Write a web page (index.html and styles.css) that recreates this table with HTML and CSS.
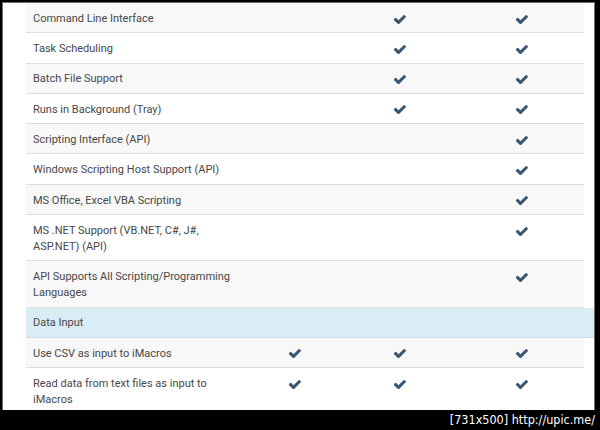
FILE: index.html
```html
<!DOCTYPE html>
<html lang="en">
<head>
    <meta charset="UTF-8">
    <title>iMacros Feature Comparison</title>
    <link rel="stylesheet" href="styles.css">
</head>
<body>
    <svg class="defs" width="0" height="0">
        <symbol id="check" viewBox="143 402 1528 1024">
            <path d="M1671 566q0 40-28 68l-724 724-136 136q-28 28-68 28t-68-28l-136-136-362-362q-28-28-28-68t28-68l136-136q28-28 68-28t68 28l294 295 656-657q28-28 68-28t68 28l136 136q28 28 28 68z"/>
        </symbol>
    </svg>
    <div class="frame">
        <div class="features">
            <div class="row">
                <div class="name">Command Line Interface</div>
                <div class="cell"></div>
                <div class="cell"><svg class="tick"><use href="#check"/></svg></div>
                <div class="cell"><svg class="tick"><use href="#check"/></svg></div>
            </div>
            <div class="row">
                <div class="name">Task Scheduling</div>
                <div class="cell"></div>
                <div class="cell"><svg class="tick"><use href="#check"/></svg></div>
                <div class="cell"><svg class="tick"><use href="#check"/></svg></div>
            </div>
            <div class="row">
                <div class="name">Batch File Support</div>
                <div class="cell"></div>
                <div class="cell"><svg class="tick"><use href="#check"/></svg></div>
                <div class="cell"><svg class="tick"><use href="#check"/></svg></div>
            </div>
            <div class="row">
                <div class="name">Runs in Background (Tray)</div>
                <div class="cell"></div>
                <div class="cell"><svg class="tick"><use href="#check"/></svg></div>
                <div class="cell"><svg class="tick"><use href="#check"/></svg></div>
            </div>
            <div class="row">
                <div class="name">Scripting Interface (API)</div>
                <div class="cell"></div>
                <div class="cell"></div>
                <div class="cell"><svg class="tick"><use href="#check"/></svg></div>
            </div>
            <div class="row">
                <div class="name">Windows Scripting Host Support (API)</div>
                <div class="cell"></div>
                <div class="cell"></div>
                <div class="cell"><svg class="tick"><use href="#check"/></svg></div>
            </div>
            <div class="row">
                <div class="name">MS Office, Excel VBA Scripting</div>
                <div class="cell"></div>
                <div class="cell"></div>
                <div class="cell"><svg class="tick"><use href="#check"/></svg></div>
            </div>
            <div class="row">
                <div class="name">MS .NET Support (VB.NET, C#, J#, ASP.NET) (API)</div>
                <div class="cell"></div>
                <div class="cell"></div>
                <div class="cell"><svg class="tick"><use href="#check"/></svg></div>
            </div>
            <div class="row">
                <div class="name">API Supports All Scripting/Programming Languages</div>
                <div class="cell"></div>
                <div class="cell"></div>
                <div class="cell"><svg class="tick"><use href="#check"/></svg></div>
            </div>
            <!-- section header -->
            <div class="row section">
                <div class="name">Data Input</div>
            </div>
            <div class="row">
                <div class="name">Use CSV as input to iMacros</div>
                <div class="cell"><svg class="tick"><use href="#check"/></svg></div>
                <div class="cell"><svg class="tick"><use href="#check"/></svg></div>
                <div class="cell"><svg class="tick"><use href="#check"/></svg></div>
            </div>
            <div class="row">
                <div class="name">Read data from text files as input to iMacros</div>
                <div class="cell"><svg class="tick"><use href="#check"/></svg></div>
                <div class="cell"><svg class="tick"><use href="#check"/></svg></div>
                <div class="cell"><svg class="tick"><use href="#check"/></svg></div>
            </div>
        </div>
    </div>
    <div class="caption">[731x500] http://upic.me/</div>
</body>
</html>
```
FILE: styles.css
```css
body {
    margin: 0;
    padding: 0;
    background-color: #000;
    font-family: Roboto, "Liberation Sans", sans-serif;
    overflow: hidden;
}
.defs {
    position: absolute;
}
.frame {
    margin: 2px 5px 0 2px;
    height: 407px;
    background-color: #fff;
    border: 1px solid #6e6e6e;
    border-bottom: none;
    overflow: hidden;
}
.features {
    margin-left: 23px;
    width: 558px;
    font-size: 11px;
    color: #474747;
}
.row {
    display: grid;
    grid-template-columns: 224px 90px 120px 124px;
    border-bottom: 1px solid #dedede;
    line-height: 16px;
}
.row:nth-child(odd) {
    background-color: #f8f8f8;
}
.row.section {
    background-color: #d9edf7;
    margin-right: -10px;
    border-bottom-color: #c9dde7;
}
.name {
    padding: 7.8px 8px 5.5px 7px;
}
.cell {
    display: flex;
    justify-content: center;
    align-items: flex-start;
    padding-top: 11.5px;
}
.tick {
    width: 12px;
    height: 9px;
    fill: #3a5673;
}
.caption {
    text-align: right;
    padding-right: 5px;
    color: #fff;
    font-family: "DejaVu Sans Condensed", sans-serif;
    font-size: 12.5px;
    line-height: 20px;
}
```
